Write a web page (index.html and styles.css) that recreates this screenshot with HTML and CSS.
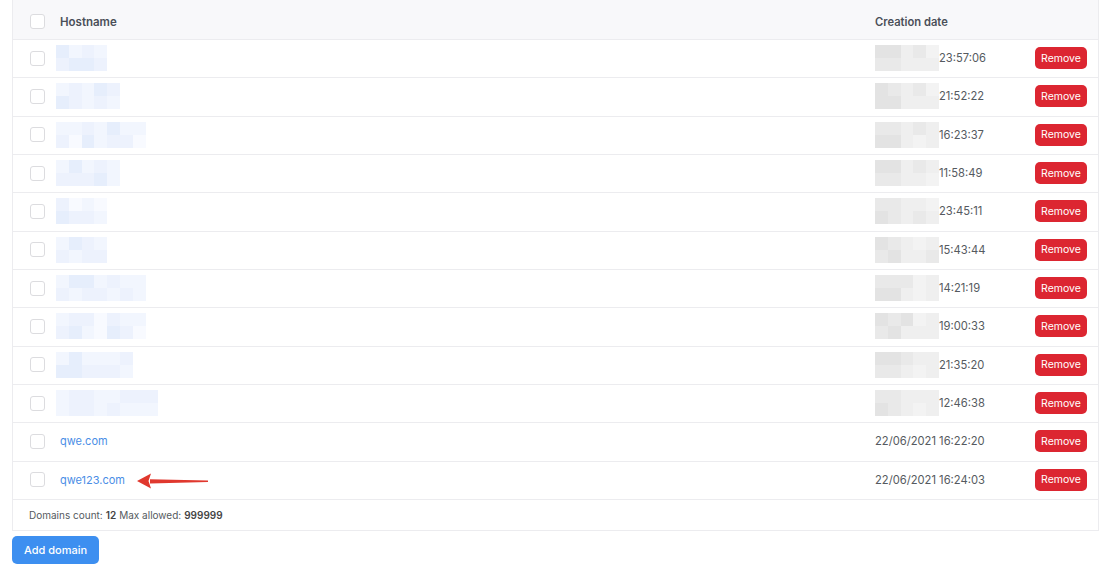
FILE: index.html
```html
<!DOCTYPE html>
<html>
<head>
<meta charset="utf-8">
<link rel="stylesheet" href="styles.css">
</head>
<body>
<div class="table">
  <div class="row head">
    <div class="c-chk"><span class="chk"></span></div>
    <div class="c-host">Hostname</div>
    <div class="c-date">Creation date</div>
    <div class="c-act"></div>
  </div>

  <div class="row">
    <div class="c-chk"><span class="chk"></span></div>
    <div class="c-host"><div class="blur b4"><i class="a"></i><i class="b"></i><i class="c"></i><i class="a"></i><i class="b"></i><i class="a"></i><i class="c"></i><i class="b"></i></div></div>
    <div class="c-date"><div class="gblur"><i class="a"></i><i class="b"></i><i class="a"></i><i class="b"></i><i class="c"></i><i class="c"></i><i class="b"></i><i class="c"></i><i class="d"></i><i class="c"></i></div>23:57:06</div>
    <div class="c-act"><button class="btn-remove">Remove</button></div>
  </div>

  <div class="row">
    <div class="c-chk"><span class="chk"></span></div>
    <div class="c-host"><div class="blur b5"><i class="c"></i><i class="a"></i><i class="b"></i><i class="b"></i><i class="c"></i><i class="c"></i><i class="a"></i><i class="b"></i><i class="b"></i><i class="c"></i></div></div>
    <div class="c-date"><div class="gblur"><i class="a"></i><i class="a"></i><i class="b"></i><i class="a"></i><i class="c"></i><i class="c"></i><i class="b"></i><i class="c"></i><i class="d"></i><i class="c"></i></div>21:52:22</div>
    <div class="c-act"><button class="btn-remove">Remove</button></div>
  </div>

  <div class="row">
    <div class="c-chk"><span class="chk"></span></div>
    <div class="c-host"><div class="blur b7"><i class="c"></i><i class="b"></i><i class="c"></i><i class="d"></i><i class="b"></i><i class="a"></i><i class="c"></i><i class="c"></i><i class="a"></i><i class="b"></i><i class="c"></i><i class="b"></i><i class="c"></i><i class="d"></i></div></div>
    <div class="c-date"><div class="gblur"><i class="b"></i><i class="a"></i><i class="b"></i><i class="a"></i><i class="c"></i><i class="c"></i><i class="b"></i><i class="d"></i><i class="c"></i><i class="c"></i></div>16:23:37</div>
    <div class="c-act"><button class="btn-remove">Remove</button></div>
  </div>

  <div class="row">
    <div class="c-chk"><span class="chk"></span></div>
    <div class="c-host"><div class="blur b5"><i class="c"></i><i class="b"></i><i class="a"></i><i class="b"></i><i class="c"></i><i class="b"></i><i class="b"></i><i class="a"></i><i class="c"></i><i class="c"></i></div></div>
    <div class="c-date"><div class="gblur"><i class="a"></i><i class="b"></i><i class="a"></i><i class="b"></i><i class="c"></i><i class="c"></i><i class="b"></i><i class="c"></i><i class="c"></i><i class="d"></i></div>11:58:49</div>
    <div class="c-act"><button class="btn-remove">Remove</button></div>
  </div>

  <div class="row">
    <div class="c-chk"><span class="chk"></span></div>
    <div class="c-host"><div class="blur b4"><i class="b"></i><i class="a"></i><i class="d"></i><i class="b"></i><i class="c"></i><i class="b"></i><i class="d"></i><i class="c"></i></div></div>
    <div class="c-date"><div class="gblur"><i class="b"></i><i class="a"></i><i class="b"></i><i class="b"></i><i class="c"></i><i class="c"></i><i class="c"></i><i class="b"></i><i class="d"></i><i class="c"></i></div>23:45:11</div>
    <div class="c-act"><button class="btn-remove">Remove</button></div>
  </div>

  <div class="row">
    <div class="c-chk"><span class="chk"></span></div>
    <div class="c-host"><div class="blur b4"><i class="c"></i><i class="b"></i><i class="a"></i><i class="c"></i><i class="b"></i><i class="b"></i><i class="c"></i><i class="b"></i></div></div>
    <div class="c-date"><div class="gblur"><i class="a"></i><i class="b"></i><i class="b"></i><i class="a"></i><i class="c"></i><i class="c"></i><i class="d"></i><i class="c"></i><i class="c"></i><i class="b"></i></div>15:43:44</div>
    <div class="c-act"><button class="btn-remove">Remove</button></div>
  </div>

  <div class="row">
    <div class="c-chk"><span class="chk"></span></div>
    <div class="c-host"><div class="blur b7"><i class="c"></i><i class="b"></i><i class="a"></i><i class="c"></i><i class="a"></i><i class="b"></i><i class="c"></i><i class="b"></i><i class="b"></i><i class="c"></i><i class="c"></i><i class="b"></i><i class="c"></i><i class="c"></i></div></div>
    <div class="c-date"><div class="gblur"><i class="b"></i><i class="a"></i><i class="b"></i><i class="a"></i><i class="b"></i><i class="c"></i><i class="d"></i><i class="d"></i><i class="c"></i><i class="c"></i></div>14:21:19</div>
    <div class="c-act"><button class="btn-remove">Remove</button></div>
  </div>

  <div class="row">
    <div class="c-chk"><span class="chk"></span></div>
    <div class="c-host"><div class="blur b7"><i class="c"></i><i class="b"></i><i class="b"></i><i class="a"></i><i class="b"></i><i class="c"></i><i class="d"></i><i class="d"></i><i class="b"></i><i class="a"></i><i class="c"></i><i class="b"></i><i class="c"></i><i class="d"></i></div></div>
    <div class="c-date"><div class="gblur"><i class="a"></i><i class="b"></i><i class="b"></i><i class="a"></i><i class="a"></i><i class="c"></i><i class="d"></i><i class="c"></i><i class="c"></i><i class="c"></i></div>19:00:33</div>
    <div class="c-act"><button class="btn-remove">Remove</button></div>
  </div>

  <div class="row">
    <div class="c-chk"><span class="chk"></span></div>
    <div class="c-host"><div class="blur b6"><i class="c"></i><i class="a"></i><i class="a"></i><i class="a"></i><i class="c"></i><i class="b"></i><i class="c"></i><i class="b"></i><i class="c"></i><i class="b"></i><i class="b"></i><i class="c"></i></div></div>
    <div class="c-date"><div class="gblur"><i class="a"></i><i class="b"></i><i class="a"></i><i class="b"></i><i class="b"></i><i class="c"></i><i class="c"></i><i class="d"></i><i class="c"></i><i class="c"></i></div>21:35:20</div>
    <div class="c-act"><button class="btn-remove">Remove</button></div>
  </div>

  <div class="row">
    <div class="c-chk"><span class="chk"></span></div>
    <div class="c-host"><div class="blur b8"><i class="c"></i><i class="c"></i><i class="b"></i><i class="b"></i><i class="b"></i><i class="b"></i><i class="c"></i><i class="c"></i><i class="c"></i><i class="b"></i><i class="b"></i><i class="c"></i><i class="b"></i><i class="c"></i><i class="b"></i><i class="c"></i></div></div>
    <div class="c-date"><div class="gblur"><i class="b"></i><i class="a"></i><i class="b"></i><i class="b"></i><i class="c"></i><i class="c"></i><i class="c"></i><i class="d"></i><i class="c"></i><i class="c"></i></div>12:46:38</div>
    <div class="c-act"><button class="btn-remove">Remove</button></div>
  </div>

  <div class="row">
    <div class="c-chk"><span class="chk"></span></div>
    <div class="c-host"><a class="link" href="#">qwe.com</a></div>
    <div class="c-date">22/06/2021 16:22:20</div>
    <div class="c-act"><button class="btn-remove">Remove</button></div>
  </div>

  <div class="row">
    <div class="c-chk"><span class="chk"></span></div>
    <div class="c-host"><a class="link" href="#">qwe123.com</a>
      <svg class="arrow" width="76" height="20" viewBox="0 0 76 20">
        <path d="M14 8.2 L72 9.6 L72 11 L14 12.4 Z" fill="#e0382e"/>
        <path d="M1 10 L15 2.5 L12.5 10 L15 17.5 Z" fill="#e0382e"/>
      </svg>
    </div>
    <div class="c-date">22/06/2021 16:24:03</div>
    <div class="c-act"><button class="btn-remove">Remove</button></div>
  </div>

  <div class="footer">Domains count: <b>12</b> Max allowed: <b>999999</b></div>
</div>
<button class="btn-add">Add domain</button>
</body>
</html>
```

FILE: styles.css
```css
* { box-sizing: border-box; }
html, body { margin: 0; padding: 0; background: #fff; }
body {
  padding: 0 7px 0 12px;
  font-family: Inter, "Noto Sans", "Liberation Sans", sans-serif;
  color: #555a60;
}
.table {
  border-left: 1px solid #ececef;
  border-right: 1px solid #ececef;
  border-bottom: 1px solid #ececef;
  background: #fff;
}
.row {
  display: grid;
  grid-template-columns: 43px 1fr 160px 67px;
  align-items: center;
  height: 38.34px;
  padding-bottom: 1px;
  border-top: 1px solid #ececef;
  position: relative;
}
.row.head {
  height: 39px;
  padding-top: 4px;
  padding-bottom: 0;
  border-top: 0;
  background: #f8f8fa;
  font-size: 11px;
  font-weight: 600;
  color: #4a4f58;
}
.c-chk { padding-left: 17px; display: flex; align-items: center; }
.chk {
  display: block;
  width: 15px;
  height: 15px;
  border: 1px solid #dcdcdf;
  border-radius: 3px;
  background: #fff;
}
.c-host { padding-left: 4px; display: flex; align-items: center; position: relative; font-size: 12px; }
.head .c-host { font-size: 11.5px; }
.c-date { padding-left: 4px; display: flex; align-items: center; font-size: 11.2px; color: #555a60; }
.head .c-date { font-size: 11.2px; color: #4a4f58; }
.c-act { display: flex; justify-content: flex-end; padding-right: 11px; }
.link { color: #4a8ee6; text-decoration: none; font-size: 11px; }
.blur { margin-left: -4px; }
.btn-remove {
  border: 0;
  background: #dc2631;
  color: #fff;
  font-family: inherit;
  font-size: 10.5px;
  height: 22px;
  width: 52px;
  border-radius: 5px;
  padding: 0;
}
.blur, .gblur {
  display: grid;
  grid-auto-flow: column;
  grid-template-rows: 13px 13px;
  grid-auto-columns: 12.8px;
}
.blur i, .gblur i { display: block; }
.blur .a { background: #e6eefc; }
.blur .b { background: #edf2fd; }
.blur .c { background: #f2f6fe; }
.blur .d { background: #f8faff; }
.gblur .a { background: #e3e3e3; }
.gblur .b { background: #e9e9e9; }
.gblur .c { background: #efefef; }
.gblur .d { background: #f3f3f3; }
.arrow { position: absolute; left: 80px; top: 50%; margin-top: -9px; }
.footer {
  border-top: 1px solid #ececef;
  height: 31px;
  display: flex;
  align-items: center;
  padding-left: 16px;
  padding-top: 1px;
  font-size: 10px;
  color: #555a60;
}
.footer b { font-weight: 600; margin: 0 3px 0 3px; color: #444; }
.btn-add {
  margin-top: 5px;
  border: 0;
  background: #3d8ff0;
  color: #fff;
  font-family: inherit;
  font-size: 11px;
  font-weight: 500;
  height: 28px;
  width: 87px;
  border-radius: 5px;
}
```
